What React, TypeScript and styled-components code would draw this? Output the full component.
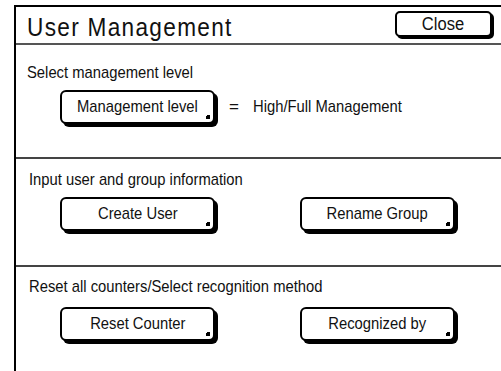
import styled, { createGlobalStyle } from 'styled-components';

const GlobalStyle = createGlobalStyle`
  html, body {
    margin: 0;
    padding: 0;
    background: #fff;
  }
  body {
    font-family: 'Liberation Sans', Arial, sans-serif;
    color: #111;
  }
`;

// the panel uses a condensed grotesque, so the Arial-metric font gets squeezed
const Narrow = styled.span<{ $origin?: string; $scale?: number }>`
  display: inline-block;
  white-space: nowrap;
  transform: scaleX(${p => p.$scale || 0.87});
  transform-origin: ${p => p.$origin || 'left'} center;
`;

const App = () => {
  return (
    <>
      <GlobalStyle />
      <Panel>
        <Header>
          <Title>
            <Narrow>User Management</Narrow>
          </Title>
          <CloseButton>
            <Narrow $origin="center" $scale={0.92}>
              Close
            </Narrow>
          </CloseButton>
        </Header>

        <Section $padTop={18} $gap={7}>
          <Label>
            <Narrow>Select management level</Narrow>
          </Label>
          <ButtonRow>
            <MenuButton>
              <Narrow $origin="center">Management level</Narrow>
              <Mark />
            </MenuButton>
            <Equals>=</Equals>
            <Value>
              <Narrow>High/Full Management</Narrow>
            </Value>
          </ButtonRow>
        </Section>
        <Divider />

        <Section $padTop={11} $gap={7}>
          <Label $shift={2}>
            <Narrow>Input user and group information</Narrow>
          </Label>
          <ButtonRow $gap={82}>
            <MenuButton>
              <Narrow $origin="center">Create User</Narrow>
              <Mark />
            </MenuButton>
            <MenuButton>
              <Narrow $origin="center">Rename Group</Narrow>
              <Mark />
            </MenuButton>
          </ButtonRow>
        </Section>
        <Divider />

        <Section $padTop={10} $gap={10}>
          <Label $shift={2}>
            <Narrow>Reset all counters/Select recognition method</Narrow>
          </Label>
          <ButtonRow $gap={82}>
            <MenuButton>
              <Narrow $origin="center">Reset Counter</Narrow>
              <Mark />
            </MenuButton>
            <MenuButton>
              <Narrow $origin="center">Recognized by</Narrow>
              <Mark />
            </MenuButton>
          </ButtonRow>
        </Section>
      </Panel>
    </>
  );
};

export default App;

const Panel = styled.div`
  margin: 5px 0 0 14px;
  height: 366px;
  border-top: 2px solid #000;
  border-left: 2px solid #000;
  box-sizing: border-box;
  display: flex;
  flex-direction: column;
`;

const Header = styled.header`
  display: flex;
  align-items: flex-start;
  justify-content: space-between;
  height: 36px;
  border-bottom: 2px solid #555;
  padding: 0 9px 0 11px;
`;

const Title = styled.h1`
  margin: 6px 0 0;
  font-size: 26px;
  font-weight: normal;
  letter-spacing: 1.5px;
  line-height: 28px;
  color: #111;
`;

const CloseButton = styled.button`
  margin-top: 4px;
  width: 97px;
  height: 26px;
  padding: 0;
  background: #fff;
  border: 2px solid #000;
  border-radius: 5px;
  box-shadow: 2px 2px 0 #000;
  font-family: inherit;
  font-size: 18px;
  line-height: 20px;
  color: #111;
`;

const Section = styled.section<{ $padTop: number; $gap: number }>`
  display: flex;
  flex-direction: column;
  gap: ${p => p.$gap}px;
  padding: ${p => p.$padTop}px 0 0 11px;
  flex: 1;
`;

const Label = styled.div<{ $shift?: number }>`
  font-size: 17px;
  line-height: 20px;
  padding-left: ${p => p.$shift || 0}px;
`;

const ButtonRow = styled.div<{ $gap?: number }>`
  display: flex;
  align-items: center;
  gap: ${p => p.$gap || 0}px;
  padding-left: 33px;
`;

const MenuButton = styled.button`
  position: relative;
  width: 155px;
  height: 34px;
  margin: 0 3px 3px 0;
  padding: 0;
  background: #fff;
  border: 2px solid #000;
  border-radius: 6px;
  box-shadow: 3px 3px 0 #000;
  font-family: inherit;
  font-size: 17px;
  color: #111;
`;

const Mark = styled.span`
  position: absolute;
  right: 3px;
  bottom: 3px;
  width: 3px;
  height: 3px;
  background: #000;
  box-shadow: 0 -1px 0 #000, -1px 0 0 #000;
`;

const Equals = styled.span`
  margin: 0 14px 0 11px;
  font-size: 17px;
  padding-bottom: 3px;
`;

const Value = styled.span`
  font-size: 17px;
  padding-bottom: 3px;
`;

const Divider = styled.hr`
  margin: 0;
  border: none;
  border-top: 2px solid #444;
`;
